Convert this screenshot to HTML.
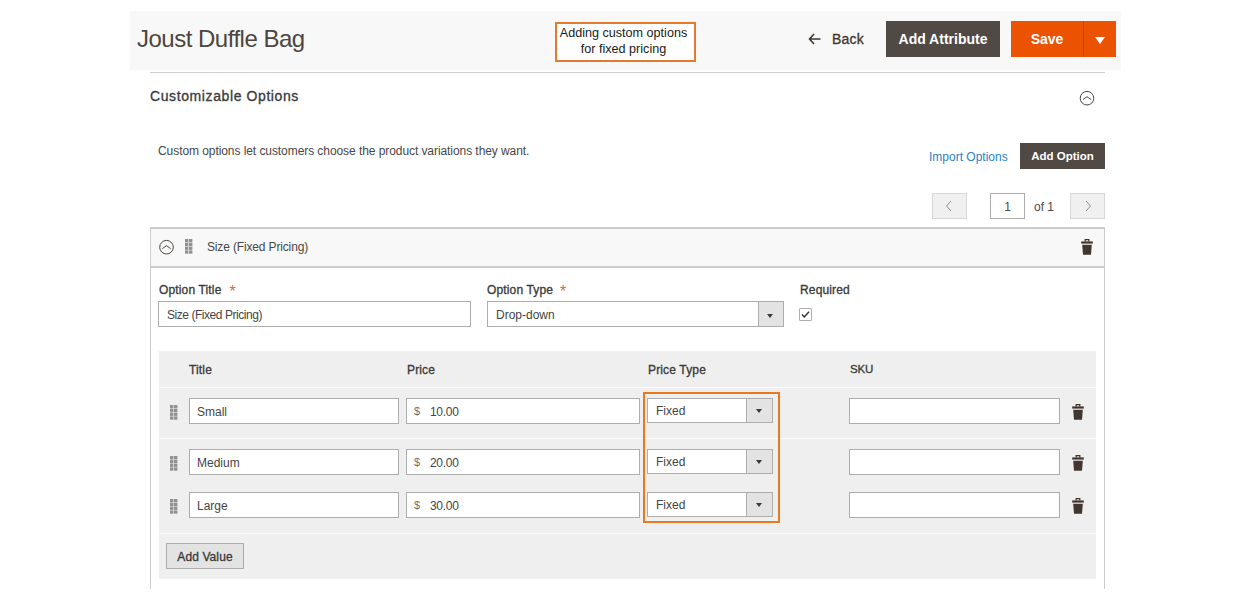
<!DOCTYPE html>
<html><head><meta charset="utf-8">
<style>
*{box-sizing:border-box;margin:0;padding:0}
html,body{width:1250px;height:600px;overflow:hidden;background:#fff}
body{position:relative;font-family:"Liberation Sans",sans-serif;color:#303030}
.a{position:absolute}
.t{position:absolute;white-space:nowrap;line-height:1}
.drag{position:absolute;width:8px;height:15px}
.drag i{position:absolute;width:3px;height:3px;background:#9e9e9e}
</style></head><body>
<div class="a" style="left:130px;top:11px;width:991px;height:59px;background:#f8f8f8"></div>
<div class="t" style="left:137px;top:27px;font-size:24px;color:#4d4541;letter-spacing:-0.5px;">Joust Duffle Bag</div>
<div class="a" style="left:555px;top:22px;width:141px;height:40px;border:2px solid #e37a2d;background:#fff"></div>
<div class="t" style="left:553px;top:27px;font-size:12.6px;color:#1a1a1a;width:141px;text-align:center;">Adding custom options</div>
<div class="t" style="left:553px;top:43px;font-size:12.6px;color:#1a1a1a;width:141px;text-align:center;">for fixed pricing</div>
<svg class="a" style="left:808px;top:33px" width="14" height="12" viewBox="0 0 14 12"><path d="M6 1 L1.5 6 L6 11 M1.5 6 H12.5" fill="none" stroke="#41362f" stroke-width="1.6"/></svg>
<div class="t" style="left:832px;top:32px;font-size:14px;color:#41362f;letter-spacing:0.2px;-webkit-text-stroke:0.32px #41362f;">Back</div>
<div class="a" style="left:886px;top:21px;width:114px;height:36px;background:#514943"></div>
<div class="t" style="left:886px;top:32px;font-size:14px;color:#fff;font-weight:700;width:114px;text-align:center;">Add Attribute</div>
<div class="a" style="left:1011px;top:21px;width:105px;height:36px;background:#eb5202"></div>
<div class="a" style="left:1083px;top:21px;width:1px;height:36px;background:#c54603"></div>
<div class="t" style="left:1011px;top:32px;font-size:14px;color:#fff;font-weight:700;width:72px;text-align:center;">Save</div>
<div class="a" style="left:1094.5px;top:37px;width:0;height:0;border-left:5.0px solid transparent;border-right:5.0px solid transparent;border-top:7px solid #fff"></div>
<div class="a" style="left:150px;top:72px;width:955px;height:1px;background:#d1d1d1"></div>
<div class="t" style="left:150px;top:89px;font-size:14px;color:#3a3a3a;letter-spacing:0.6px;-webkit-text-stroke:0.32px #3a3a3a;">Customizable Options</div>
<svg class="a" style="left:1078px;top:89px" width="18" height="18" viewBox="0 0 18 18"><circle cx="9" cy="9.2" r="6.8" fill="none" stroke="#4a4542" stroke-width="1"/><path d="M4.9 10.6 L9 7.7 L13.1 10.6" fill="none" stroke="#4a4542" stroke-width="1"/></svg>
<div class="t" style="left:158px;top:145px;font-size:12px;color:#474747;letter-spacing:-0.07px;">Custom options let customers choose the product variations they want.</div>
<div class="t" style="left:929px;top:151px;font-size:12px;color:#2b82c4;">Import Options</div>
<div class="a" style="left:1020px;top:143px;width:85px;height:26px;background:#514943"></div>
<div class="t" style="left:1020px;top:151px;font-size:11.5px;color:#fff;font-weight:700;width:85px;text-align:center;">Add Option</div>
<div class="a" style="left:932px;top:193px;width:35px;height:26px;background:#f0f0f0;border:1px solid #d6d6d6"></div>
<svg class="a" style="left:944px;top:200px" width="10" height="12" viewBox="0 0 10 12"><path d="M7 1 L2.5 6 L7 11" fill="none" stroke="#8a8a8a" stroke-width="1"/></svg>
<div class="a" style="left:990px;top:193px;width:35px;height:26px;background:#fff;border:1px solid #adadad"></div>
<div class="t" style="left:990px;top:201px;font-size:12px;color:#4a4a4a;width:35px;text-align:center;">1</div>
<div class="t" style="left:1034px;top:201px;font-size:12px;color:#4a4a4a;">of 1</div>
<div class="a" style="left:1070px;top:193px;width:35px;height:26px;background:#f0f0f0;border:1px solid #d6d6d6"></div>
<svg class="a" style="left:1083px;top:200px" width="10" height="12" viewBox="0 0 10 12"><path d="M3 1 L7.5 6 L3 11" fill="none" stroke="#8a8a8a" stroke-width="1"/></svg>
<div class="a" style="left:150px;top:227px;width:955px;height:362px;border-left:1px solid #cccccc;border-right:1px solid #cccccc"></div>
<div class="a" style="left:150px;top:227px;width:955px;height:41px;background:#f8f8f8;border:1px solid #cccccc;border-top-width:2px;border-bottom-width:2px"></div>
<svg class="a" style="left:158px;top:239px" width="17" height="17" viewBox="0 0 17 17"><circle cx="8.5" cy="8.2" r="6.8" fill="none" stroke="#4a4542" stroke-width="1"/><path d="M4.4 9.6 L8.5 6.7 L12.6 9.6" fill="none" stroke="#4a4542" stroke-width="1"/></svg>
<svg class="a" style="left:185px;top:239px" width="8" height="15" viewBox="0 0 8 15" fill="#929292"><rect x="0" y="0.0" width="3.4" height="3.3"/><rect x="4" y="0.0" width="3.4" height="3.3"/><rect x="0" y="3.8" width="3.4" height="3.3"/><rect x="4" y="3.8" width="3.4" height="3.3"/><rect x="0" y="7.6" width="3.4" height="3.3"/><rect x="4" y="7.6" width="3.4" height="3.3"/><rect x="0" y="11.399999999999999" width="3.4" height="3.3"/><rect x="4" y="11.399999999999999" width="3.4" height="3.3"/></svg>
<div class="t" style="left:207px;top:241px;font-size:12px;color:#474747;letter-spacing:-0.15px;">Size (Fixed Pricing)</div>
<svg class="a" style="left:1081px;top:239px" width="12" height="16" viewBox="0 0 12 16"><path d="M4.2 2.6 V0.7 H7.8 V2.6" fill="none" stroke="#41362f" stroke-width="1.3"/><path d="M0.2 2.4 H11.8 V4.6 H0.2 Z" fill="#41362f"/><path d="M1.2 5.8 H10.8 L10 15.8 H2 Z" fill="#41362f"/></svg>
<div class="t" style="left:159px;top:284px;font-size:12px;color:#3a3a3a;letter-spacing:0.15px;-webkit-text-stroke:0.32px #3a3a3a;">Option Title</div>
<div class="t" style="left:229.5px;top:284px;font-size:16px;color:#d46a45;">*</div>
<div class="a" style="left:158px;top:301px;width:313px;height:26px;background:#fff;border:1px solid #adadad"></div>
<div class="t" style="left:167px;top:309px;font-size:12px;color:#454545;letter-spacing:-0.45px;">Size (Fixed Pricing)</div>
<div class="t" style="left:487px;top:284px;font-size:12px;color:#3a3a3a;letter-spacing:0.15px;-webkit-text-stroke:0.32px #3a3a3a;">Option Type</div>
<div class="t" style="left:560px;top:284px;font-size:16px;color:#d46a45;">*</div>
<div class="a" style="left:487px;top:301px;width:297px;height:26px;background:#fff;border:1px solid #adadad"></div>
<div class="a" style="left:758px;top:301px;width:26px;height:26px;background:#e3e3e3;border:1px solid #adadad"></div>
<div class="a" style="left:767px;top:314px;width:0;height:0;border-left:3.0px solid transparent;border-right:3.0px solid transparent;border-top:4px solid #3a3a3a"></div>
<div class="t" style="left:496px;top:309px;font-size:12px;color:#454545;">Drop-down</div>
<div class="t" style="left:800px;top:284px;font-size:12px;color:#3a3a3a;letter-spacing:0.15px;-webkit-text-stroke:0.32px #3a3a3a;">Required</div>
<div class="a" style="left:799px;top:308px;width:13px;height:13px;border:1px solid #adadad;border-radius:1px;background:#fff"></div>
<svg class="a" style="left:799px;top:308px" width="13" height="13" viewBox="0 0 13 13"><path d="M3 6.5 L5.3 9 L10 3.8" fill="none" stroke="#303030" stroke-width="1.4"/></svg>
<div class="a" style="left:159px;top:351px;width:937px;height:228px;background:#efefef"></div>
<div class="a" style="left:159px;top:387px;width:937px;height:1px;background:#fafafa"></div>
<div class="a" style="left:159px;top:438px;width:937px;height:1px;background:#fafafa"></div>
<div class="a" style="left:159px;top:533px;width:937px;height:1px;background:#fafafa"></div>
<div class="t" style="left:189px;top:364px;font-size:12px;color:#3a3a3a;letter-spacing:0.15px;-webkit-text-stroke:0.32px #3a3a3a;">Title</div>
<div class="t" style="left:407px;top:364px;font-size:12px;color:#3a3a3a;letter-spacing:0.15px;-webkit-text-stroke:0.32px #3a3a3a;">Price</div>
<div class="t" style="left:648px;top:364px;font-size:12px;color:#3a3a3a;letter-spacing:0.15px;-webkit-text-stroke:0.32px #3a3a3a;">Price Type</div>
<div class="t" style="left:850px;top:364px;font-size:11.5px;color:#3a3a3a;letter-spacing:-0.2px;-webkit-text-stroke:0.32px #3a3a3a;">SKU</div>
<svg class="a" style="left:170px;top:405px" width="8" height="15" viewBox="0 0 8 15" fill="#929292"><rect x="0" y="0.0" width="3.4" height="3.3"/><rect x="4" y="0.0" width="3.4" height="3.3"/><rect x="0" y="3.8" width="3.4" height="3.3"/><rect x="4" y="3.8" width="3.4" height="3.3"/><rect x="0" y="7.6" width="3.4" height="3.3"/><rect x="4" y="7.6" width="3.4" height="3.3"/><rect x="0" y="11.399999999999999" width="3.4" height="3.3"/><rect x="4" y="11.399999999999999" width="3.4" height="3.3"/></svg>
<div class="a" style="left:189px;top:398px;width:210px;height:26px;background:#fff;border:1px solid #adadad"></div>
<div class="t" style="left:197px;top:406px;font-size:12px;color:#454545;">Small</div>
<div class="a" style="left:406px;top:398px;width:234px;height:26px;background:#fff;border:1px solid #adadad"></div>
<div class="t" style="left:414px;top:406px;font-size:11px;color:#6f6f6f;">$</div>
<div class="t" style="left:430px;top:406px;font-size:12px;color:#454545;letter-spacing:-0.3px;">10.00</div>
<div class="a" style="left:647px;top:398px;width:126px;height:25px;background:#fff;border:1px solid #adadad"></div>
<div class="a" style="left:746px;top:398px;width:27px;height:25px;background:#e3e3e3;border:1px solid #adadad"></div>
<div class="a" style="left:756px;top:409px;width:0;height:0;border-left:3.0px solid transparent;border-right:3.0px solid transparent;border-top:4px solid #3a3a3a"></div>
<div class="t" style="left:656px;top:405px;font-size:12px;color:#454545;">Fixed</div>
<div class="a" style="left:849px;top:398px;width:211px;height:26px;background:#fff;border:1px solid #adadad"></div>
<svg class="a" style="left:1072px;top:404px" width="12" height="16" viewBox="0 0 12 16"><path d="M4.2 2.6 V0.7 H7.8 V2.6" fill="none" stroke="#41362f" stroke-width="1.3"/><path d="M0.2 2.4 H11.8 V4.6 H0.2 Z" fill="#41362f"/><path d="M1.2 5.8 H10.8 L10 15.8 H2 Z" fill="#41362f"/></svg>
<svg class="a" style="left:170px;top:456px" width="8" height="15" viewBox="0 0 8 15" fill="#929292"><rect x="0" y="0.0" width="3.4" height="3.3"/><rect x="4" y="0.0" width="3.4" height="3.3"/><rect x="0" y="3.8" width="3.4" height="3.3"/><rect x="4" y="3.8" width="3.4" height="3.3"/><rect x="0" y="7.6" width="3.4" height="3.3"/><rect x="4" y="7.6" width="3.4" height="3.3"/><rect x="0" y="11.399999999999999" width="3.4" height="3.3"/><rect x="4" y="11.399999999999999" width="3.4" height="3.3"/></svg>
<div class="a" style="left:189px;top:449px;width:210px;height:26px;background:#fff;border:1px solid #adadad"></div>
<div class="t" style="left:197px;top:457px;font-size:12px;color:#454545;">Medium</div>
<div class="a" style="left:406px;top:449px;width:234px;height:26px;background:#fff;border:1px solid #adadad"></div>
<div class="t" style="left:414px;top:457px;font-size:11px;color:#6f6f6f;">$</div>
<div class="t" style="left:430px;top:457px;font-size:12px;color:#454545;letter-spacing:-0.3px;">20.00</div>
<div class="a" style="left:647px;top:449px;width:126px;height:25px;background:#fff;border:1px solid #adadad"></div>
<div class="a" style="left:746px;top:449px;width:27px;height:25px;background:#e3e3e3;border:1px solid #adadad"></div>
<div class="a" style="left:756px;top:460px;width:0;height:0;border-left:3.0px solid transparent;border-right:3.0px solid transparent;border-top:4px solid #3a3a3a"></div>
<div class="t" style="left:656px;top:456px;font-size:12px;color:#454545;">Fixed</div>
<div class="a" style="left:849px;top:449px;width:211px;height:26px;background:#fff;border:1px solid #adadad"></div>
<svg class="a" style="left:1072px;top:455px" width="12" height="16" viewBox="0 0 12 16"><path d="M4.2 2.6 V0.7 H7.8 V2.6" fill="none" stroke="#41362f" stroke-width="1.3"/><path d="M0.2 2.4 H11.8 V4.6 H0.2 Z" fill="#41362f"/><path d="M1.2 5.8 H10.8 L10 15.8 H2 Z" fill="#41362f"/></svg>
<svg class="a" style="left:170px;top:499px" width="8" height="15" viewBox="0 0 8 15" fill="#929292"><rect x="0" y="0.0" width="3.4" height="3.3"/><rect x="4" y="0.0" width="3.4" height="3.3"/><rect x="0" y="3.8" width="3.4" height="3.3"/><rect x="4" y="3.8" width="3.4" height="3.3"/><rect x="0" y="7.6" width="3.4" height="3.3"/><rect x="4" y="7.6" width="3.4" height="3.3"/><rect x="0" y="11.399999999999999" width="3.4" height="3.3"/><rect x="4" y="11.399999999999999" width="3.4" height="3.3"/></svg>
<div class="a" style="left:189px;top:492px;width:210px;height:26px;background:#fff;border:1px solid #adadad"></div>
<div class="t" style="left:197px;top:500px;font-size:12px;color:#454545;">Large</div>
<div class="a" style="left:406px;top:492px;width:234px;height:26px;background:#fff;border:1px solid #adadad"></div>
<div class="t" style="left:414px;top:500px;font-size:11px;color:#6f6f6f;">$</div>
<div class="t" style="left:430px;top:500px;font-size:12px;color:#454545;letter-spacing:-0.3px;">30.00</div>
<div class="a" style="left:647px;top:492px;width:126px;height:25px;background:#fff;border:1px solid #adadad"></div>
<div class="a" style="left:746px;top:492px;width:27px;height:25px;background:#e3e3e3;border:1px solid #adadad"></div>
<div class="a" style="left:756px;top:503px;width:0;height:0;border-left:3.0px solid transparent;border-right:3.0px solid transparent;border-top:4px solid #3a3a3a"></div>
<div class="t" style="left:656px;top:499px;font-size:12px;color:#454545;">Fixed</div>
<div class="a" style="left:849px;top:492px;width:211px;height:26px;background:#fff;border:1px solid #adadad"></div>
<svg class="a" style="left:1072px;top:498px" width="12" height="16" viewBox="0 0 12 16"><path d="M4.2 2.6 V0.7 H7.8 V2.6" fill="none" stroke="#41362f" stroke-width="1.3"/><path d="M0.2 2.4 H11.8 V4.6 H0.2 Z" fill="#41362f"/><path d="M1.2 5.8 H10.8 L10 15.8 H2 Z" fill="#41362f"/></svg>
<div class="a" style="left:643px;top:392px;width:137px;height:131px;border:2px solid #e8791f"></div>
<div class="a" style="left:166px;top:543px;width:78px;height:26px;background:#e3e3e3;border:1px solid #adadad"></div>
<div class="t" style="left:166px;top:551px;font-size:12px;color:#3a3a3a;letter-spacing:0.1px;-webkit-text-stroke:0.32px #3a3a3a;width:78px;text-align:center;">Add Value</div>
</body></html>
